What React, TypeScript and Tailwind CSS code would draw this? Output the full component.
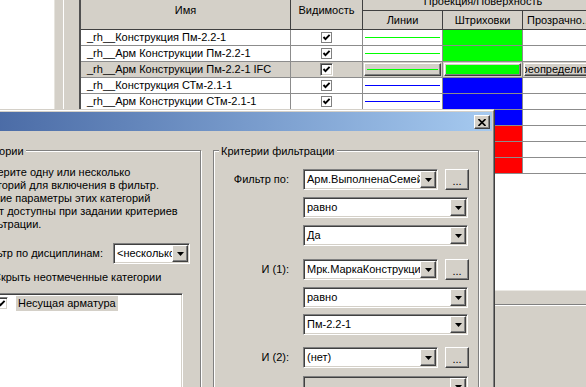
import React from "react";

const raised =
  "border border-t-white border-l-white border-r-[#404040] border-b-[#404040] shadow-[inset_-1px_-1px_0_#808080]";
const sunken =
  "border border-t-[#808080] border-l-[#808080] border-r-white border-b-white shadow-[inset_1px_1px_0_#404040,inset_-1px_-1px_0_#d4d0c8]";
const etched = "border border-[#808080] shadow-[inset_1px_1px_0_#ffffff,1px_1px_0_#ffffff]";

const rows = [
  { name: "_rh__Конструкция Пм-2.2-1", color: "#00ff00" },
  { name: "_rh__Арм Конструкции Пм-2.2-1", color: "#00ff00" },
  { name: "_rh__Арм Конструкции Пм-2.2-1 IFC", color: "#00ff00", selected: true },
  { name: "_rh__Конструкция СТм-2.1-1", color: "#0000ff" },
  { name: "_rh__Арм Конструкции СТм-2.1-1", color: "#0000ff" },
  { name: "_rh__Арм Конструкции СТм-2.1-1 IFC", color: "#0000ff" },
  { name: "_rh__Конструкция Пм-2.3-1", color: "#ff0000" },
  { name: "_rh__Арм Конструкции Пм-2.3-1", color: "#ff0000" },
  { name: "_rh__Арм Конструкции Пм-2.3-1 IFC", color: "#ff0000" },
];

function Check() {
  return (
    <svg width="9" height="9" viewBox="0 0 9 9">
      <path d="M1.5 4 L3.5 6.2 L7.6 1.8" fill="none" stroke="#000" strokeWidth="1.9" />
    </svg>
  );
}

function Arrow() {
  return (
    <svg width="7" height="4" viewBox="0 0 7 4">
      <polygon points="0,0 7,0 3.5,4" fill="#000" />
    </svg>
  );
}

function Combo({ text, className, disabled }: { text?: string; className: string; disabled?: boolean }) {
  return (
    <div className={`flex h-[21px] p-[1px] ${sunken} ${disabled ? "bg-[#d4d0c8]" : "bg-white"} ${className}`}>
      <span className="flex-1 overflow-hidden whitespace-nowrap pl-[2px] leading-[17px]">{text}</span>
      <div className={`flex w-[16px] items-center justify-center bg-[#d4d0c8] ${raised}`}>
        <Arrow />
      </div>
    </div>
  );
}

function Dots() {
  return (
    <div className={`ml-[7px] flex h-[21px] w-[24px] items-center justify-center bg-[#d4d0c8] pt-[3px] ${raised}`}>
      ...
    </div>
  );
}

function FilterRow({ label, text, short, className }: { label?: string; text?: string; short?: boolean; className?: string }) {
  return (
    <div className={`flex items-center ${className ?? ""}`}>
      <span className="w-[75px] text-right">{label}</span>
      <Combo text={text} className={`ml-[14px] ${short ? "w-[135px]" : "w-[165px]"}`} />
      {short && <Dots />}
    </div>
  );
}

export default function App() {
  return (
    <div className="relative h-[387px] w-[586px] overflow-hidden bg-[#d4d0c8] font-['Liberation_Sans',Arial,sans-serif] text-[11px] text-black">
      {/* main window behind */}
      <div className="flex h-full flex-col">
        <div className="flex h-[290px]">
          <div className="w-[54px] bg-white" />
          <div className="w-[1px] bg-[#e6e4de]" />
          <div className="w-[8px] bg-[#d4d0c8]" />
          <div className="w-[1px] bg-white" />
          <div className="w-[15px] bg-[#d4d0c8]" />
          <div className="w-[2px] bg-[#505050]" />
          <div className="flex-1 overflow-hidden bg-white">
            <div className="-mt-[8px] w-[560px]">
              <div className="flex h-[38px] border-b border-[#404040] bg-[#d4d0c8]">
                <div className="flex w-[210px] items-center justify-center border-r border-[#404040]">Имя</div>
                <div className="flex w-[72px] items-center justify-center border-r border-[#404040]">Видимость</div>
                <div className="flex w-[240px] flex-col">
                  <div className="flex h-[19px] items-center justify-center border-b border-[#404040]">Проекция/Поверхность</div>
                  <div className="flex h-[18px]">
                    <div className="flex w-[80px] items-center justify-center border-r border-[#404040]">Линии</div>
                    <div className="flex w-[80px] items-center justify-center border-r border-[#404040]">Штриховки</div>
                    <div className="flex w-[70px] items-center overflow-hidden whitespace-nowrap border-r border-[#404040] pl-[4px]">Прозрачно...</div>
                  </div>
                </div>
              </div>
              {rows.map((r) => (
                <div key={r.name} className={`flex h-[16px] ${r.selected ? "bg-[#d4d0c8]" : ""}`}>
                  <div className="flex w-[210px] items-center whitespace-nowrap border-r border-b border-[#8c8c8c] pl-[6px]">{r.name}</div>
                  <div className="flex w-[72px] items-center justify-center border-r border-b border-[#8c8c8c]">
                    {r.selected ? (
                      <span className={`flex h-[13px] w-[13px] items-center justify-center bg-white ${sunken}`}>
                        <Check />
                      </span>
                    ) : (
                      <span className="flex h-[11px] w-[11px] items-center justify-center border border-[#808080] bg-white">
                        <Check />
                      </span>
                    )}
                  </div>
                  <div className="flex w-[80px] items-center border-r border-b border-[#8c8c8c] px-[1px]">
                    {r.selected ? (
                      <div className={`flex h-[13px] flex-1 items-center bg-[#d4d0c8] px-[2px] ${raised}`}>
                        <div className="h-[1px] flex-1" style={{ background: r.color }} />
                      </div>
                    ) : (
                      <div className="mx-[1px] h-[1px] flex-1" style={{ background: r.color }} />
                    )}
                  </div>
                  <div
                    className="flex w-[80px] items-center border-r border-b border-[#8c8c8c] px-[1px]"
                    style={r.selected ? undefined : { background: r.color }}
                  >
                    {r.selected && (
                      <div className={`flex h-[13px] flex-1 bg-[#d4d0c8] p-[1px] ${raised}`}>
                        <div className="flex-1" style={{ background: r.color }} />
                      </div>
                    )}
                  </div>
                  <div className="flex w-[70px] items-center border-r border-b border-[#8c8c8c] pl-[1px]">
                    {r.selected && (
                      <div className={`flex h-[13px] w-[80px] items-center overflow-hidden whitespace-nowrap bg-[#d4d0c8] leading-[11px] ${raised}`}>
                        <span className="-ml-[17.5px]">Переопределить...</span>
                      </div>
                    )}
                  </div>
                </div>
              ))}
            </div>
          </div>
        </div>
        <div className="h-[1px] bg-[#ebe9e4]" />
        <div className="h-[13px] bg-[#d4d0c8]" />
        <div className="h-[1px] bg-[#808080]" />
        <div className="h-[1px] bg-white" />
        <div className="flex-1 bg-[#d4d0c8]" />
      </div>

      {/* dialog window */}
      <div className="absolute left-[-48px] top-[109px] h-[300px] w-[543px] border border-t-[#d4d0c8] border-l-[#d4d0c8] border-r-[#404040] border-b-[#404040]">
        <div className="h-full border border-t-white border-l-white border-r-[#808080] border-b-[#808080] bg-[#d4d0c8] p-[1px]">
          <div className="flex h-[19px] justify-end bg-linear-to-r from-[#4464a0] to-[#a6caf0] pr-[2px] pt-[3px]">
            <div className={`flex h-[14px] w-[16px] items-center justify-center bg-[#d4d0c8] ${raised}`}>
              <svg width="8" height="7" viewBox="0 0 8 7">
                <path d="M0.5 0 L7.5 7 M7.5 0 L0.5 7" stroke="#000" strokeWidth="1.6" />
              </svg>
            </div>
          </div>
          <div className="mt-[19px] flex pl-[8px]">
            {/* categories group */}
            <div className={`relative h-[260px] w-[238px] ${etched}`}>
              <span className="absolute left-[6px] top-[-7px] bg-[#d4d0c8] px-[2px] leading-[14px]">Категории</span>
              <div className="pl-[12px] pr-[10px] pt-[15px]">
                <div className="whitespace-nowrap leading-[13px]">
                  <div>Выберите одну или несколько</div>
                  <div>категорий для включения в фильтр.</div>
                  <div>Общие параметры этих категорий</div>
                  <div>будут доступны при задании критериев</div>
                  <div>фильтрации.</div>
                </div>
                <div className="mt-[12px] flex items-center justify-between">
                  <span>Фильтр по дисциплинам:</span>
                  <Combo text="<несколько>" className="w-[77px]" />
                </div>
                <div className="mt-[6px] flex h-[14px] items-center gap-[4px]">
                  <span className={`h-[13px] w-[13px] bg-white ${sunken}`} />
                  <span>Скрыть неотмеченные категории</span>
                </div>
                <div className={`mt-[9px] h-[100px] w-[207px] bg-white p-[1px] ${sunken}`}>
                  <div className="flex h-[15px] items-center pl-[17px] pt-[1px]">
                    <span className={`flex h-[13px] w-[13px] items-center justify-center bg-white ${sunken}`}>
                      <Check />
                    </span>
                    <span className="ml-[8px] bg-[#d4d0c8] px-[2px] leading-[15px]">Несущая арматура</span>
                  </div>
                </div>
              </div>
            </div>
            {/* criteria group */}
            <div className={`relative ml-[12px] h-[260px] w-[266px] ${etched}`}>
              <span className="absolute left-[5px] top-[-7px] bg-[#d4d0c8] px-[2px] leading-[14px]">Критерии фильтрации</span>
              <div className="pt-[18px]">
                <FilterRow label="Фильтр по:" text="Арм.ВыполненаСемейством" short />
                <FilterRow text="равно" className="mt-[7px]" />
                <FilterRow text="Да" className="mt-[7px]" />
                <FilterRow label="И (1):" text="Мрк.МаркаКонструкции" short className="mt-[13px]" />
                <FilterRow text="равно" className="mt-[7px]" />
                <FilterRow text="Пм-2.2-1" className="mt-[6px]" />
                <FilterRow label="И (2):" text="(нет)" short className="mt-[12px]" />
                <div className="mt-[8px] flex">
                  <Combo className="ml-[89px] w-[165px]" disabled />
                </div>
              </div>
            </div>
          </div>
        </div>
      </div>
    </div>
  );
}
